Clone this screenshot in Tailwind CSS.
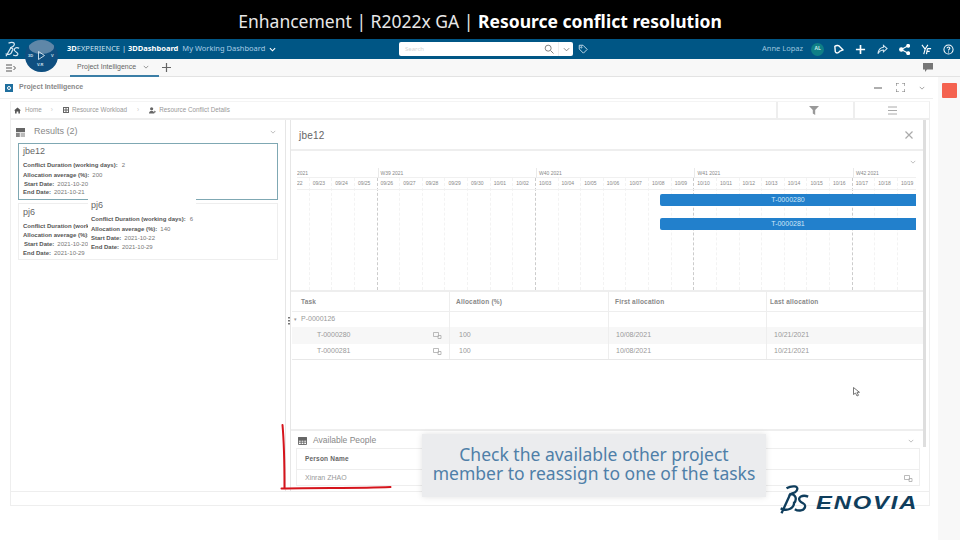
<!DOCTYPE html>
<html>
<head>
<meta charset="utf-8">
<script src="https://cdn.jsdelivr.net/npm/@tailwindcss/browser@4"></script>
</head>
<body class="m-0">
<div class="relative w-[960px] h-[540px] overflow-hidden bg-white flex flex-col font-['Liberation_Sans',sans-serif] text-[#777]">

  <!-- Title bar -->
  <div class="h-[39px] shrink-0 bg-black flex items-center justify-center pt-[4px] text-[#e8e8e8] text-[17.500px] font-['Noto_Sans',sans-serif]">
    <span>Enhancement | R2022x GA | <b class="font-bold text-white">Resource conflict resolution</b></span>
  </div>

  <!-- Blue top bar -->
  <div class="h-[20px] shrink-0 bg-[#005685] flex items-center text-[7.5px] font-['Noto_Sans',sans-serif]">
    <svg class="ml-[3px] w-[17px] h-[17px]" viewBox="0 0 40 40" fill="none" stroke="#d8e8f2" stroke-width="2.800"><path d="M13 5 C22 1 29 4 26 10 C24 14 19 15 17 16 C24 16 25 21 21 25 M19 15 L7 36 M6 30 C14 34 22 30 21 22 M38 17 C31 14 25 17 27 22 C29 27 36 26 35 31 C33 36 27 35 24 33"/></svg>
    <div class="ml-[47px] w-[332px] flex items-center gap-[4px] whitespace-nowrap">
      <span class="text-[#cfe3f0]"><b class="text-white">3D</b>EXPERIENCE | <b class="text-white">3DDashboard</b></span>
      <span class="text-[#a9cde5]">My Working Dashboard</span>
      <svg class="w-[7px] h-[5px]" viewBox="0 0 8 5" fill="none" stroke="#fff" stroke-width="1.3"><path d="M1 1l3 3 3-3"/></svg>
    </div>
    <div class="w-[174px] h-[14px] bg-white rounded-[2px] flex items-center pl-[6px] text-[6px] text-[#d4d4d4]">
      <span class="flex-1">Search</span>
      <svg class="w-[10px] h-[10px]" viewBox="0 0 12 12" fill="none" stroke="#777" stroke-width="1.1"><circle cx="5" cy="5" r="3.6"/><path d="M8 8l3.4 3.4"/></svg>
      <span class="w-px h-[14px] bg-[#eeeeee] mx-[4px]"></span>
      <svg class="w-[7px] h-[5px] mr-[3px]" viewBox="0 0 8 5" fill="none" stroke="#777" stroke-width="1"><path d="M1 1l3 3 3-3"/></svg>
    </div>
    <svg class="ml-[5px] w-[10px] h-[10px]" viewBox="0 0 12 12" fill="none" stroke="#cfe3f0" stroke-width="1.1"><path d="M1.500 1.500h4.500l5 5-4.500 4.500-5-5z"/><circle cx="4" cy="4" r=".8"/></svg>
    <span class="ml-[174px] text-[#9cc4de] text-[7.500px] whitespace-nowrap">Anne Lopaz</span>
    <span class="ml-[8px] w-[13px] h-[13px] rounded-full bg-[#0e7f86] text-[#bfe6e6] text-[5px] font-bold flex items-center justify-center">AL</span>
    <div class="ml-[9px] flex items-center gap-[11px]">
      <svg class="w-[11px] h-[11px]" viewBox="0 0 12 12" fill="none" stroke="#fff" stroke-width="1.500" stroke-linejoin="round"><path d="M2 2.500C4 1 6.500 1.500 7.500 3L11 6.500 7 8C6.500 10 3.500 10.500 2.500 8.500z"/></svg>
      <svg class="w-[11px] h-[11px]" viewBox="0 0 12 12" fill="none" stroke="#fff" stroke-width="1.800"><path d="M6 1v10M1 6h10"/></svg>
      <svg class="w-[11px] h-[11px]" viewBox="0 0 12 12" fill="none" stroke="#d8e8f2" stroke-width="1.100"><path d="M7 1.500l4 3.500-4 3.500v-2C4 6.500 2.500 8 1 10.500 1.500 6.500 3.500 4 7 3.500z"/></svg>
      <svg class="w-[11px] h-[11px]" viewBox="0 0 12 12" fill="#fff" stroke="#fff" stroke-width="1.200"><circle cx="2.500" cy="6" r="1.800"/><circle cx="10" cy="2" r="1.500"/><circle cx="10" cy="10" r="1.500"/><path d="M2.500 6L10 2M2.500 6L10 10"/></svg>
      <svg class="w-[11px] h-[11px]" viewBox="0 0 12 12" fill="none" stroke="#fff" stroke-width="1.200"><path d="M1 1l3.500 4.500L3 11M7.500 1L4.500 5.500M7 5h4M7 5l-1 6M6.500 8h3"/></svg>
      <svg class="w-[11px] h-[11px]" viewBox="0 0 12 12" fill="none" stroke="#fff" stroke-width="1.100"><circle cx="6" cy="6" r="5"/><path d="M4.500 4.500C4.500 3 7.500 3 7.500 4.500 7.500 5.700 6 5.700 6 7.200M6 8.300v1"/></svg>
    </div>
  </div>

  <!-- Tab bar -->
  <div class="h-[18px] shrink-0 bg-[#f8f8f8] border-b border-[#e3e3e3] flex items-center">
    <svg class="ml-[6px] w-[10px] h-[8px]" viewBox="0 0 10 8" fill="none" stroke="#555" stroke-width="1"><path d="M0 1h6M0 4h6M0 7h6M7.500 2l2 2-2 2"/></svg>
    <div class="ml-[54px] w-[89px] h-[18px] border-b-2 border-[#3b7ea6] flex items-center pl-[7px] text-[7px] text-[#666] -mb-px">
      <span class="whitespace-nowrap">Project Intelligence</span>
      <svg class="ml-[7px] w-[6px] h-[4px]" viewBox="0 0 8 5" fill="none" stroke="#777" stroke-width="1"><path d="M1 1l3 3 3-3"/></svg>
    </div>
    <svg class="ml-[3px] w-[9px] h-[9px]" viewBox="0 0 9 9" fill="none" stroke="#666" stroke-width="1.200"><path d="M4.500 0v9M0 4.500h9"/></svg>
    <svg class="ml-auto mr-[27px] w-[10px] h-[9px]" viewBox="0 0 10 9" fill="#777"><path d="M0 0h10v6.500H4L2 9V6.500H0z"/></svg>
  </div>

  <!-- Main area -->
  <div class="flex-1 flex min-h-0">
    <div class="w-[938px] flex flex-col">
      <!-- Widget header -->
      <div class="h-[22px] shrink-0 mr-[5px] border-b border-[#eeeeee] flex items-center text-[7px] font-bold text-[#888]">
        <span class="ml-[5px] w-[8px] h-[8px] bg-[#1f6f9e] flex items-center justify-center"><span class="w-[4px] h-[4px] rounded-full border border-white"></span></span>
        <span class="ml-[6px]">Project Intelligence</span>
        <svg class="ml-auto w-[8px] h-[2px]" viewBox="0 0 8 2"><path d="M0 1h8" stroke="#777" stroke-width="1.200"/></svg>
        <svg class="ml-[14px] w-[9px] h-[9px]" viewBox="0 0 9 9" fill="none" stroke="#777" stroke-width="1.100"><path d="M0 3V0h3M6 0h3v3M9 6v3H6M3 9H0V6"/></svg>
        <svg class="ml-[14px] mr-[8px] w-[6px] h-[4px]" viewBox="0 0 8 5" fill="none" stroke="#888" stroke-width="1"><path d="M1 1l3 3 3-3"/></svg>
      </div>

      <!-- Outer panel -->
      <div class="mt-[2px] ml-[10px] w-[920px] h-[405px] border border-[#eeeeee] border-t-[#f4f4f4] flex flex-col">
        <!-- Breadcrumb -->
        <div class="h-[18px] shrink-0 flex items-center border-b-2 border-[#eeeeee] text-[6.300px] text-[#999]">
          <svg class="ml-[3px] w-[7px] h-[7px]" viewBox="0 0 8 8" fill="#555"><path d="M4 .5L8 4H6.800V7.500H5V5H3v2.500H1.200V4H0z"/></svg>
          <span class="ml-[4px]">Home</span>
          <span class="ml-[9px] text-[#ccc]">›</span>
          <svg class="ml-[10px] w-[6px] h-[6px]" viewBox="0 0 6 6" fill="#666"><path d="M0 0h6v6H0zM1 1v1.500h1.500V1zM3.500 1v1.500H5V1zM1 3.500V5h1.500V3.500zM3.500 3.500V5H5V3.500z"/></svg>
          <span class="ml-[3px]">Resource Workload</span>
          <span class="ml-[10px] text-[#ccc]">›</span>
          <svg class="ml-[10px] w-[7px] h-[7px]" viewBox="0 0 8 8" fill="#666"><circle cx="3" cy="2" r="1.800"/><path d="M0 7.500C0 5 1.500 4.200 3 4.200S6 5 6 7.500zM6 4l2 1.500L6 7z"/></svg>
          <span class="ml-[3px]">Resource Conflict Details</span>
          <div class="ml-auto w-[77px] h-full border-l-2 border-[#eeeeee] flex items-center justify-center pr-[4px]">
            <svg class="w-[10px] h-[10px]" viewBox="0 0 10 10" fill="#999"><path d="M0 1h10L6.200 5v5L3.800 8.500V5z"/></svg>
          </div>
          <div class="w-[76px] h-full border-l-2 border-[#eeeeee] flex items-center justify-center">
            <svg class="w-[9px] h-[9px]" viewBox="0 0 9 9" stroke="#aaa" stroke-width="1"><path d="M0 1h9M0 4.500h9M0 8h9"/></svg>
          </div>
        </div>

        <!-- Body -->
        <div class="h-[372px] shrink-0 flex border-b border-[#eeeeee]">
          <!-- Left results panel -->
          <div class="w-[275px] shrink-0 border-r border-[#e6e6e6] flex flex-col px-[7px]">
            <div class="h-[22px] flex items-center text-[9px] text-[#888] mt-[1px]">
              <svg class="-ml-[2px] w-[9px] h-[9px]" viewBox="0 0 9 9"><path d="M0 0h9v4.200H0z" fill="#666"/><path d="M0 5h3.800v4H0z" fill="#888"/><path d="M4.600 5H9v4H4.600z" fill="#bbb"/></svg>
              <span class="ml-[9px]">Results (2)</span>
              <svg class="ml-auto mr-[2px] w-[6px] h-[4px]" viewBox="0 0 8 5" fill="none" stroke="#aaa" stroke-width="1"><path d="M1 1l3 3 3-3"/></svg>
            </div>
            <div class="h-[57px] border border-[#7fa8b3] px-[4px] pt-[1px] text-[6px] leading-[9px]">
              <div class="text-[9px] leading-[12px] text-[#666] mb-[3px]">jbe12</div>
              <div class="h-[11px] flex gap-[4px] items-center"><b class="text-[#555]">Conflict Duration (working days):</b><span>2</span></div>
              <div class="h-[9px] flex gap-[3px] items-center"><b class="text-[#555]">Allocation average (%):</b><span>200</span></div>
              <div class="h-[8.500px] flex gap-[3px] items-center pl-[1px]"><b class="text-[#555]">Start Date:</b><span>2021-10-20</span></div>
              <div class="h-[8px] flex gap-[3px] items-center"><b class="text-[#555]">End Date:</b><span>2021-10-21</span></div>
            </div>
            <div class="mt-[3px] h-[57px] border border-[#eeeeee] px-[4px] pt-[2px] text-[6px] leading-[9px]">
              <div class="text-[9px] leading-[12px] text-[#666] mb-[3px]">pj6</div>
              <div class="h-[10px] flex items-center"><b class="text-[#555]">Conflict Duration (work</b></div>
              <div class="h-[9px] flex items-center"><b class="text-[#555]">Allocation average (%):</b></div>
              <div class="h-[9px] flex gap-[3px] items-center pl-[1px]"><b class="text-[#555]">Start Date:</b><span>2021-10-20</span></div>
              <div class="h-[8px] flex gap-[3px] items-center"><b class="text-[#555]">End Date:</b><span>2021-10-29</span></div>
            </div>
          </div>

          <!-- Right details panel -->
          <div class="ml-[4px] w-[636px] shrink-0 border-l border-[#e6e6e6] flex relative">
            <div class="w-[632px] flex flex-col">
              <div class="h-[31px] shrink-0 border-b-2 border-[#eeeeee] flex items-center pl-[8px] pt-[1px] text-[10px] text-[#666]">
                <span class="flex-1 tracking-[0.2px]">jbe12</span>
                <svg class="mr-[10px] w-[8px] h-[8px]" viewBox="0 0 8 8" stroke="#aaa" stroke-width="1.200"><path d="M.5.500l7 7M7.500.500l-7 7"/></svg>
              </div>
              <!-- Gantt -->
              <div class="h-[141px] shrink-0 relative border-b-2 border-[#eeeeee] pl-[6px] overflow-hidden">
                <svg class="absolute right-[7px] top-[9px] w-[6px] h-[4px]" viewBox="0 0 8 5" fill="none" stroke="#aaa" stroke-width="1"><path d="M1 1l3 3 3-3"/></svg>
                <div class="mt-[17px] w-[619px] h-[122px] overflow-hidden relative">
                  <div class="ml-[-10px] w-[634px] text-[5px] text-[#888]">
                    <div class="h-[10px] grid grid-cols-[90.560px_158.480px_158.480px_158.480px_68px] border-b border-[#f0f0f0] leading-[10px]">
                      <span class="pl-[10px]">2021</span>
                      <span class="pl-[2px] border-l border-[#eaeaea]">W39 2021</span>
                      <span class="pl-[2px] border-l border-[#eaeaea]">W40 2021</span>
                      <span class="pl-[2px] border-l border-[#eaeaea]">W41 2021</span>
                      <span class="pl-[2px] border-l border-[#eaeaea]">W42 2021</span>
                    </div>
                    <div class="h-[112px] grid grid-cols-[repeat(28,22.640px)]">
                      <div class="pl-[3px] leading-[11px] border-r border-dashed border-[#f3f3f3]">09/22</div>
                      <div class="pl-[3px] leading-[11px] border-r border-dashed border-[#f3f3f3]">09/23</div>
                      <div class="pl-[3px] leading-[11px] border-r border-dashed border-[#f3f3f3]">09/24</div>
                      <div class="pl-[3px] leading-[11px] border-r border-dashed border-[#cccccc]">09/25</div>
                      <div class="pl-[3px] leading-[11px] border-r border-dashed border-[#f3f3f3]">09/26</div>
                      <div class="pl-[3px] leading-[11px] border-r border-dashed border-[#f3f3f3]">09/27</div>
                      <div class="pl-[3px] leading-[11px] border-r border-dashed border-[#f3f3f3]">09/28</div>
                      <div class="pl-[3px] leading-[11px] border-r border-dashed border-[#f3f3f3]">09/29</div>
                      <div class="pl-[3px] leading-[11px] border-r border-dashed border-[#f3f3f3]">09/30</div>
                      <div class="pl-[3px] leading-[11px] border-r border-dashed border-[#f3f3f3]">10/01</div>
                      <div class="pl-[3px] leading-[11px] border-r border-dashed border-[#cccccc]">10/02</div>
                      <div class="pl-[3px] leading-[11px] border-r border-dashed border-[#f3f3f3]">10/03</div>
                      <div class="pl-[3px] leading-[11px] border-r border-dashed border-[#f3f3f3]">10/04</div>
                      <div class="pl-[3px] leading-[11px] border-r border-dashed border-[#f3f3f3]">10/05</div>
                      <div class="pl-[3px] leading-[11px] border-r border-dashed border-[#f3f3f3]">10/06</div>
                      <div class="pl-[3px] leading-[11px] border-r border-dashed border-[#f3f3f3]">10/07</div>
                      <div class="pl-[3px] leading-[11px] border-r border-dashed border-[#f3f3f3]">10/08</div>
                      <div class="pl-[3px] leading-[11px] border-r border-dashed border-[#cccccc]">10/09</div>
                      <div class="pl-[3px] leading-[11px] border-r border-dashed border-[#f3f3f3]">10/10</div>
                      <div class="pl-[3px] leading-[11px] border-r border-dashed border-[#f3f3f3]">10/11</div>
                      <div class="pl-[3px] leading-[11px] border-r border-dashed border-[#f3f3f3]">10/12</div>
                      <div class="pl-[3px] leading-[11px] border-r border-dashed border-[#f3f3f3]">10/13</div>
                      <div class="pl-[3px] leading-[11px] border-r border-dashed border-[#f3f3f3]">10/14</div>
                      <div class="pl-[3px] leading-[11px] border-r border-dashed border-[#f3f3f3]">10/15</div>
                      <div class="pl-[3px] leading-[11px] border-r border-dashed border-[#cccccc]">10/16</div>
                      <div class="pl-[3px] leading-[11px] border-r border-dashed border-[#f3f3f3]">10/17</div>
                      <div class="pl-[3px] leading-[11px] border-r border-dashed border-[#f3f3f3]">10/18</div>
                      <div class="pl-[3px] leading-[11px] border-r border-dashed border-[#f3f3f3]">10/19</div>
                    </div>
                  </div>
                  <div class="absolute inset-x-0 top-[21px] h-px bg-[#f0f0f0]"></div>
                  <div class="absolute left-[363px] right-0 top-[26px] h-[12px] bg-[#2280cc] rounded-l-[2px] flex items-center justify-center text-[7px] text-[#cfe6f7]">T-0000280</div>
                  <div class="absolute left-[363px] right-0 top-[50px] h-[12px] bg-[#2280cc] rounded-l-[2px] flex items-center justify-center text-[7px] text-[#cfe6f7]">T-0000281</div>
                </div>
              </div>
              <!-- Task table -->
              <div class="h-[137px] shrink-0 text-[7px] text-[#999] relative">
                <svg class="absolute left-[-3px] top-[25px] w-[2px] h-[8px]" viewBox="0 0 2 8" fill="#777"><path d="M0 0h2v1.500H0zM0 3h2v1.500H0zM0 6h2v1.500H0z"/></svg>
                <div class="ml-px h-[20px] grid grid-cols-[158px_159px_158px_157px] items-center border-b border-[#eeeeee] font-bold text-[6.500px] text-[#888] tracking-[0.2px]">
                  <span class="h-full flex items-center pl-[9px] border-r border-[#eeeeee]">Task</span>
                  <span class="h-full flex items-center pl-[6px] border-r border-[#eeeeee]">Allocation (%)</span>
                  <span class="h-full flex items-center pl-[6px] border-r border-[#eeeeee]">First allocation</span>
                  <span class="h-full flex items-center pl-[3px]">Last allocation</span>
                </div>
                <div class="ml-px h-[15px] grid grid-cols-[158px_159px_158px_157px] items-center">
                  <span class="h-full flex items-center pl-[1px] border-r border-[#eeeeee]"><span class="text-[5px] ml-[1px] mr-[4px]">▾</span>P-0000126</span>
                  <span class="h-full border-r border-[#eeeeee]"></span><span class="h-full border-r border-[#eeeeee]"></span><span></span>
                </div>
                <div class="ml-px h-[17px] grid grid-cols-[158px_159px_158px_157px] items-center bg-[#f7f7f7]">
                  <span class="h-full flex items-center pl-[25px] pr-[7px] justify-between border-r border-[#eeeeee]">T-0000280<svg class="w-[9px] h-[7px]" viewBox="0 0 9 7" fill="none" stroke="#aaa" stroke-width=".8"><path d="M.5.500h5v4h-5zM5 3.500h3v3H5z"/></svg></span>
                  <span class="h-full flex items-center pl-[9px] border-r border-[#eeeeee]">100</span>
                  <span class="h-full flex items-center pl-[7px] border-r border-[#eeeeee]">10/08/2021</span>
                  <span class="h-full flex items-center pl-[7px]">10/21/2021</span>
                </div>
                <div class="ml-px h-[16px] grid grid-cols-[158px_159px_158px_157px] items-center border-b border-[#e8e8e8]">
                  <span class="h-full flex items-center pl-[25px] pr-[7px] justify-between border-r border-[#eeeeee]">T-0000281<svg class="w-[9px] h-[7px]" viewBox="0 0 9 7" fill="none" stroke="#aaa" stroke-width=".8"><path d="M.5.500h5v4h-5zM5 3.500h3v3H5z"/></svg></span>
                  <span class="h-full flex items-center pl-[9px] border-r border-[#eeeeee]">100</span>
                  <span class="h-full flex items-center pl-[7px] border-r border-[#eeeeee]">10/08/2021</span>
                  <span class="h-full flex items-center pl-[7px]">10/21/2021</span>
                </div>
              </div>
              <!-- Available people -->
              <div class="h-[63px] shrink-0 border-t-2 border-[#eeeeee] flex flex-col pl-[5px] pr-[3px]">
                <div class="h-[17px] shrink-0 flex items-center pl-[2px] pt-[2px] text-[8.500px] text-[#888]">
                  <svg class="w-[9px] h-[8px]" viewBox="0 0 9 8" fill="none" stroke="#666" stroke-width=".9"><path d="M.5.500h8v7h-8zM.5 3h8M.5 5.200h8M3.200 3v4.500M5.800 3v4.500"/><path d="M.5.500h8V3h-8z" fill="#666"/></svg>
                  <span class="ml-[6px]">Available People</span>
                  <svg class="ml-auto mr-[6px] w-[6px] h-[4px]" viewBox="0 0 8 5" fill="none" stroke="#aaa" stroke-width="1"><path d="M1 1l3 3 3-3"/></svg>
                </div>
                <div class="h-[38px] border border-[#eeeeee] flex flex-col">
                  <div class="h-[21px] shrink-0 flex items-center pl-[8px] font-bold text-[6.500px] text-[#666] border-b border-[#eeeeee] tracking-[0.2px]">Person Name</div>
                  <div class="flex-1 flex items-center justify-between pl-[8px] pr-[6px] pt-[1px] text-[7px] text-[#999]">Xinran ZHAO<svg class="w-[9px] h-[7px]" viewBox="0 0 9 7" fill="none" stroke="#aaa" stroke-width=".8"><path d="M.5.500h5v4h-5zM5 3.500h3v3H5z"/></svg></div>
                </div>
              </div>
            </div>
            <!-- Scrollbar -->
            <div class="w-[3px] h-[327px] bg-[#dedede]"></div>
          </div>
        </div>
      </div>
    </div>
    <div class="w-[22px] bg-[#f8f8f8] pt-[6px] pl-[4px]">
      <div class="w-[15px] h-[15px] rounded-[1px] bg-[#f4624f]"></div>
    </div>
  </div>

  <!-- Compass -->
  <div class="absolute left-[25px] top-[40px] w-[33px] h-[32px] rounded-full bg-[#0f4f80] overflow-hidden text-[#cfe0ec] text-[4px] font-bold">
    <div class="absolute left-[4px] right-[4px] top-0 h-[14px] bg-[#5f87a8] rounded-b-[50%]"></div>
    <span class="absolute left-[3px] top-[13px]">3D</span>
    <svg class="absolute left-[13px] top-[11px] w-[7px] h-[9px]" viewBox="0 0 7 9" fill="none" stroke="#dce9f2" stroke-width=".9"><path d="M.5.500l6 4-6 4z"/></svg>
    <span class="absolute left-[26px] top-[13px]">V</span>
    <span class="absolute left-[12px] top-[22px]">V.R</span>
  </div>

  <!-- Dragged card -->
  <div class="absolute left-[88px] top-[199px] w-[108px] h-[52px] bg-white pl-[3px] text-[6px] leading-[9px]">
    <div class="text-[9px] leading-[12px] text-[#666] mb-[3px]">pj6</div>
    <div class="h-[11px] flex gap-[4px] items-center whitespace-nowrap"><b class="text-[#555]">Conflict Duration (working days):</b><span>6</span></div>
    <div class="h-[9px] flex gap-[3px] items-center whitespace-nowrap"><b class="text-[#555]">Allocation average (%):</b><span>140</span></div>
    <div class="h-[9px] flex gap-[3px] items-center whitespace-nowrap"><b class="text-[#555]">Start Date:</b><span>2021-10-22</span></div>
    <div class="h-[8px] flex gap-[3px] items-center whitespace-nowrap"><b class="text-[#555]">End Date:</b><span>2021-10-29</span></div>
  </div>

  <!-- Red annotation -->
  <svg class="absolute left-[278px] top-[422px] w-[116px] h-[70px]" viewBox="0 0 116 70" fill="none" stroke="#d5141c" stroke-width="2" stroke-linecap="round"><path d="M4.500 3C6 20 6.500 50 6.500 66M3.500 66.500C40 65.500 80 66.500 112.500 65"/></svg>

  <!-- Cursor -->
  <svg class="absolute left-[853px] top-[387px] w-[8px] h-[10px]" viewBox="0 0 8 10" fill="#fff" stroke="#555" stroke-width=".8"><path d="M.5.500v7l2-1.500 1.500 3 1.500-.7-1.500-3h2.500z"/></svg>

  <!-- Callout -->
  <div class="absolute left-[422px] top-[434px] w-[344px] h-[63px] bg-[#ebecee] shadow-[0_0_6px_rgba(0,0,0,0.12)] flex flex-col items-center justify-center text-[#4f7fa8] text-[17.500px] leading-[19px] font-['Noto_Sans',sans-serif] pb-[3px] whitespace-nowrap">
    <span>Check the available other project</span>
    <span>member to reassign to one of the tasks</span>
  </div>

  <!-- ENOVIA logo -->
  <div class="absolute left-[779px] top-[485px] flex items-end">
    <svg class="w-[30px] h-[30px]" viewBox="0 0 36 36" fill="none" stroke="#0f3d5c" stroke-width="2.800"><path d="M9 4C16 0 25 1 21 7 19 10 15 10 14 11 20 11 22 17 18 22M14 10L3 34M2 28C10 32 19 28 18 20M35 14C28 11 22 15 25 19 28 23 33 22 31 27 29 32 22 31 19 29"/></svg>
    <span class="ml-[7px] mb-[2px] text-[#0f3d5c] text-[19px] leading-[20px] font-bold italic tracking-[1.500px] inline-block origin-left scale-x-[1.25]">ENOVIA</span>
  </div>
</div>
</body>
</html>
